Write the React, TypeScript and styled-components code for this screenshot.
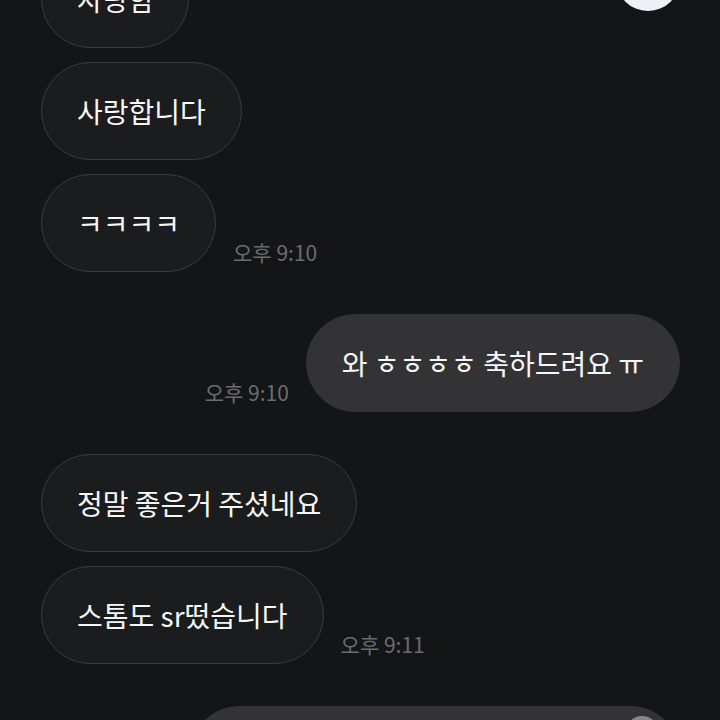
import styled, { createGlobalStyle } from "styled-components";

const GlobalStyle = createGlobalStyle`
  html, body {
    margin: 0;
    padding: 0;
    background: #141517;
  }
  body {
    font-family: "Noto Sans CJK KR", "Noto Sans", sans-serif;
  }
`;

const Screen = styled.div`
  position: relative;
  width: 720px;
  height: 720px;
  overflow: hidden;
  background: #141517;
`;

const Thread = styled.div`
  display: flex;
  flex-direction: column;
  gap: 42px;
  margin-top: -50px;
  padding: 0 40px 0 41px;
`;

const Group = styled.div`
  display: flex;
  flex-direction: column;
  gap: 14px;
`;

const Row = styled.div<{ $mine?: boolean }>`
  display: flex;
  align-items: flex-end;
  justify-content: flex-start;
  flex-direction: ${(p) => (p.$mine ? "row-reverse" : "row")};
  gap: 17px;
`;

const Bubble = styled.div<{ $mine?: boolean; $width?: number }>`
  box-sizing: border-box;
  height: 98px;
  display: flex;
  align-items: center;
  padding: 0 35px;
  border-radius: 49px;
  font-size: 28px;
  font-weight: 400;
  line-height: 36px;
  color: #f7f7f7;
  white-space: nowrap;
  background: ${(p) => (p.$mine ? "#333335" : "#1b1c1e")};
  border: 1px solid ${(p) => (p.$mine ? "#333335" : "#3b3b3e")};
  ${(p) => (p.$width ? `width: ${p.$width}px;` : "")}
  position: relative;
  overflow: hidden;
`;

const Time = styled.span`
  font-size: 21px;
  line-height: 24px;
  color: #6c6c70;
  margin-bottom: 8px;
  white-space: nowrap;
`;

const Reaction = styled.div`
  position: absolute;
  right: 40px;
  top: -53px;
  width: 64px;
  height: 64px;
  border-radius: 50%;
  background: #eef0f8;
`;

const BubbleAvatar = styled.div`
  position: absolute;
  right: 20px;
  top: 9px;
  width: 34px;
  height: 34px;
  border-radius: 50%;
  background: linear-gradient(180deg, #8a8a8e, #5a5a5e);
`;

export default function App() {
  return (
    <Screen>
      <GlobalStyle />
      <Reaction />
      <Thread>
        <Group>
          <Row>
            <Bubble $width={148}>사랑함</Bubble>
          </Row>
          <Row>
            <Bubble>사랑합니다</Bubble>
          </Row>
          <Row>
            <Bubble>ㅋㅋㅋㅋ</Bubble>
            <Time>오후 9:10</Time>
          </Row>
        </Group>
        <Group>
          <Row $mine>
            <Bubble $mine>와 ㅎㅎㅎㅎ 축하드려요 ㅠ</Bubble>
            <Time>오후 9:10</Time>
          </Row>
        </Group>
        <Group>
          <Row>
            <Bubble>정말 좋은거 주셨네요</Bubble>
          </Row>
          <Row>
            <Bubble>스톰도 sr떴습니다</Bubble>
            <Time>오후 9:11</Time>
          </Row>
        </Group>
        <Group>
          <Row $mine>
            <Bubble $mine $width={490}>
              <BubbleAvatar />
            </Bubble>
          </Row>
        </Group>
      </Thread>
    </Screen>
  );
}
